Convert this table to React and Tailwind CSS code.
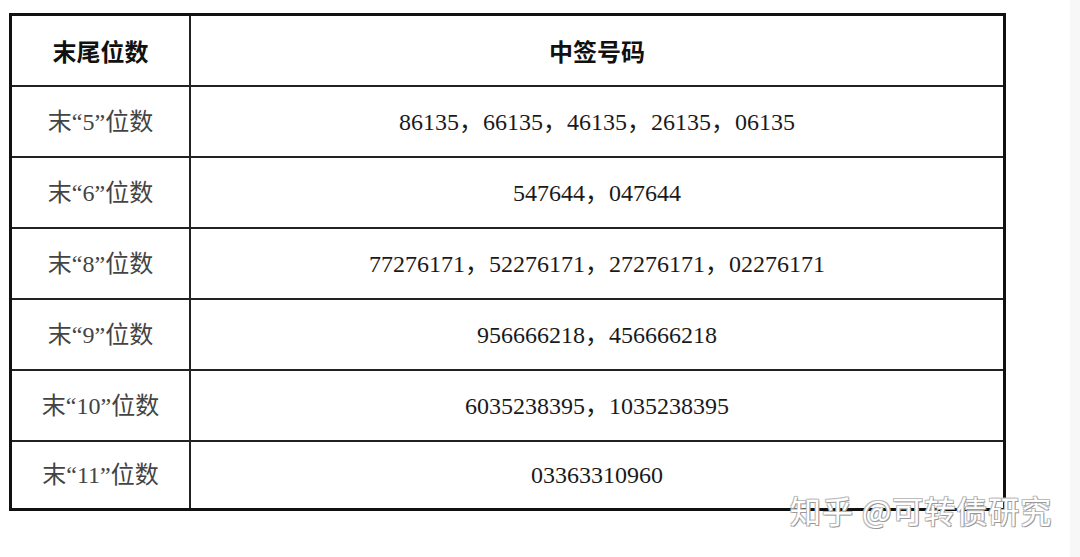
import React from 'react';

const rows = [
  { tail: '末“5”位数', nums: '86135，66135，46135，26135，06135' },
  { tail: '末“6”位数', nums: '547644，047644' },
  { tail: '末“8”位数', nums: '77276171，52276171，27276171，02276171' },
  { tail: '末“9”位数', nums: '956666218，456666218' },
  { tail: '末“10”位数', nums: '6035238395，1035238395' },
  { tail: '末“11”位数', nums: '03363310960', last: true },
];

const serif = { fontFamily: '"Liberation Serif", "Noto Sans CJK SC", serif' };

export default function App() {
  return (
    <div className="relative flex h-[557px] w-[1080px] overflow-hidden bg-white">
      <div className="w-[1070px] pl-[9px] pt-[13px]">
        <div className="w-[997px] border-[3px] border-[#111]">
          {/* Header */}
          <div className="grid h-[69px] grid-cols-[179px_1fr] font-['Noto_Sans_CJK_SC',sans-serif] text-[24px] font-bold text-[#111]">
            <div className="flex items-center justify-center border-r-2 border-[#222]">末尾位数</div>
            <div className="flex items-center justify-center">中签号码</div>
          </div>

          {rows.map((r) => (
            <div
              key={r.tail}
              className={`grid grid-cols-[179px_1fr] border-t-2 border-[#222] text-[24px] ${r.last ? 'h-[68px]' : 'h-[71px]'}`}
              style={serif}
            >
              <div className="flex items-center justify-center border-r-2 border-[#222] text-[#444]">{r.tail}</div>
              <div className="flex items-center justify-center text-[#1a1a1a]">{r.nums}</div>
            </div>
          ))}
        </div>
      </div>
      <div className="flex-1 bg-[#f7f7f7]" />

      {/* watermark */}
      <div
        className="absolute left-[790px] top-[494px] whitespace-nowrap font-['Noto_Sans_CJK_SC',sans-serif] text-[31px] tracking-[1px] leading-none text-white"
        style={{ textShadow: '1px 1px 0 #999, -1px -1px 0 #bbb, 1px -1px 0 #bbb, -1px 1px 0 #bbb' }}
      >
        知乎 @可转债研究
      </div>
    </div>
  );
}
